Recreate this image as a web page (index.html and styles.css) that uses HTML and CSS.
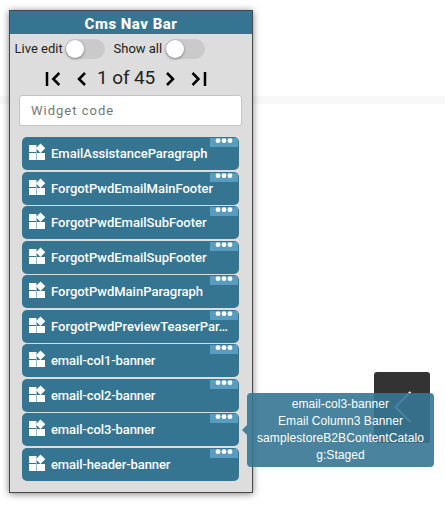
FILE: index.html
```
<!DOCTYPE html>
<html lang="en">
<head>
<meta charset="utf-8">
<title>Cms Nav Bar</title>
<link rel="stylesheet" href="styles.css">
</head>
<body>
<svg width="0" height="0" class="defs">
  <symbol id="widget" viewBox="0 0 18 18"><path d="M1 2h7v7H1zM1 10h7v7H1zM9 10h8v7H9zM12.5 .6l4.8 4.7-4.8 4.7-4.7-4.7z"/><path opacity=".5" d="M8 2h1v15H8z"/></symbol>
  <symbol id="dots" viewBox="0 0 28 9"><circle cx="8" cy="2.7" r="2.4"/><circle cx="14" cy="2.7" r="2.4"/><circle cx="20" cy="2.7" r="2.4"/></symbol>
</svg>
<div class="divider"></div>
<main class="panel">
  <h1 class="title">Cms Nav Bar</h1>
  <div class="switches">
    <label class="switch live">Live edit<span class="track"><span class="knob"></span></span></label>
    <label class="switch">Show all<span class="track"><span class="knob"></span></span></label>
  </div>
  <nav class="pager">
    <svg class="first" width="16" height="14" viewBox="0 0 16 14"><path d="M2 0v14M14.3 1L8.3 7l6 6"/></svg>
    <svg class="prev" width="9" height="14" viewBox="0 0 9 14"><path d="M8 1L2 7l6 6"/></svg>
    <span class="count">1 of 45</span>
    <svg class="next" width="9" height="14" viewBox="0 0 9 14"><path d="M1 1l6 6-6 6"/></svg>
    <svg class="last" width="16" height="14" viewBox="0 0 16 14"><path d="M14 0v14M1.5 1l6 6-6 6"/></svg>
  </nav>
  <input class="search" type="text" placeholder="Widget code">
  <ul class="list">
    <li class="item"><svg class="icon"><use href="#widget"/></svg><span class="name">EmailAssistanceParagraph</span><svg class="more"><use href="#dots"/></svg></li>
    <li class="item"><svg class="icon"><use href="#widget"/></svg><span class="name">ForgotPwdEmailMainFooter</span><svg class="more"><use href="#dots"/></svg></li>
    <li class="item"><svg class="icon"><use href="#widget"/></svg><span class="name">ForgotPwdEmailSubFooter</span><svg class="more"><use href="#dots"/></svg></li>
    <li class="item"><svg class="icon"><use href="#widget"/></svg><span class="name">ForgotPwdEmailSupFooter</span><svg class="more"><use href="#dots"/></svg></li>
    <li class="item"><svg class="icon"><use href="#widget"/></svg><span class="name">ForgotPwdMainParagraph</span><svg class="more"><use href="#dots"/></svg></li>
    <li class="item"><svg class="icon"><use href="#widget"/></svg><span class="name">ForgotPwdPreviewTeaserPar…</span><svg class="more"><use href="#dots"/></svg></li>
    <li class="item"><svg class="icon"><use href="#widget"/></svg><span class="name tight">email-col1-banner</span><svg class="more"><use href="#dots"/></svg></li>
    <li class="item"><svg class="icon"><use href="#widget"/></svg><span class="name tight">email-col2-banner</span><svg class="more"><use href="#dots"/></svg></li>
    <li class="item"><svg class="icon"><use href="#widget"/></svg><span class="name tight">email-col3-banner</span><svg class="more"><use href="#dots"/></svg></li>
    <li class="item"><svg class="icon"><use href="#widget"/></svg><span class="name tight">email-header-banner</span><svg class="more"><use href="#dots"/></svg></li>
  </ul>
</main>
<div class="drawer"><svg width="18" height="32" viewBox="0 0 18 32"><path d="M16.5 1L1.5 16l15 15"/></svg></div>
<div class="tooltip">email-col3-banner<br>Email Column3 Banner<br>samplestoreB2BContentCatalog:Staged</div>
</body>
</html>
```
FILE: styles.css
```
* { box-sizing: border-box; }
body {
  position: relative;
  margin: 0;
  height: 518px;
  padding: 10px 0 0 9px;
  overflow: hidden;
  background: #fff;
  font-family: Roboto, sans-serif;
  color: #212121;
}
.defs { position: absolute; }
.divider {
  position: absolute;
  top: 96px;
  left: 0;
  right: 0;
  height: 8px;
  background: #f8f8f8;
}
.panel {
  position: relative;
  width: 244px;
  height: 483px;
  border: 1px solid #484848;
  background: #ddd;
  box-shadow: 0 1px 7px rgba(0, 0, 0, .5);
}
.title {
  margin: 0;
  height: 23px;
  background: #357592;
  color: #fff;
  font-size: 15px;
  font-weight: 800;
  letter-spacing: .5px;
  line-height: 26px;
  text-align: center;
}
.switches {
  display: flex;
  gap: 9px;
  height: 30px;
  padding: 5px 0 0 4.5px;
}
.switch {
  display: flex;
  font-size: 13px;
  line-height: 19px;
  white-space: nowrap;
  height: 20px;
  width: 91px;
  justify-content: space-between;
}
.live { width: 90px; }
.track {
  width: 40px;
  height: 20px;
  padding: 1px;
  border-radius: 10px;
  background: #cacaca;
}
.knob {
  display: block;
  width: 18px;
  height: 18px;
  border-radius: 50%;
  background: #fff;
  box-shadow: 0 1px 3px rgba(0, 0, 0, .4);
}
.pager {
  display: flex;
  align-items: center;
  height: 29px;
  padding-left: 35px;
}
.pager svg {
  flex: none;
  margin-top: 1px;
  fill: none;
  stroke: #000;
  stroke-width: 2.5;
}
.pager .first { margin-right: 16px; }
.count {
  width: 59px;
  margin: -2px 10px 0 11px;
  font-size: 19px;
  line-height: 26px;
  letter-spacing: -.1px;
  white-space: nowrap;
}
.pager .last { margin-left: 16px; }
.search {
  display: block;
  width: 223px;
  height: 31px;
  margin: 2px 0 0 9px;
  padding: 0 11px;
  border: 1px solid #c5c5c5;
  border-radius: 3px;
  background: #fff;
  font: 13px Roboto, sans-serif;
  letter-spacing: 1px;
}
.search::placeholder { color: #777; }
.list {
  display: flex;
  flex-direction: column;
  gap: 1.5px;
  margin: 11px 0 0 12px;
  padding: 0;
  width: 217px;
  list-style: none;
}
.item {
  position: relative;
  display: flex;
  align-items: center;
  height: 33.05px;
  padding-left: 6px;
  border-radius: 5px;
  background: #357592;
  color: #fff;
  font-size: 13px;
  font-weight: 500;
}
.icon {
  flex: none;
  width: 18px;
  height: 18px;
  margin-top: -3px;
  fill: #fff;
}
.name {
  margin-left: 5px;
  white-space: nowrap;
}
.tight { letter-spacing: -.1px; }
.more {
  position: absolute;
  top: 1px;
  right: 1px;
  width: 28px;
  height: 9px;
  background: #589cc0;
  fill: #fff;
}
.drawer {
  position: absolute;
  left: 374px;
  top: 372px;
  width: 56px;
  height: 71px;
  border-radius: 3px;
  background: #333;
}
.drawer svg {
  display: block;
  margin: 19px 0 0 20px;
  fill: none;
  stroke: #fff;
  stroke-width: 2;
}
.tooltip {
  position: absolute;
  left: 247px;
  top: 393px;
  width: 187px;
  height: 74px;
  padding: 3px 8px;
  border-radius: 4px;
  background: rgba(53, 117, 146, .9);
  color: #fff;
  font: 12px/17px "Liberation Sans", Arial, sans-serif;
  letter-spacing: .08px;
  text-align: center;
  word-break: break-all;
}
.tooltip::before {
  content: "";
  position: absolute;
  left: -5px;
  top: 32px;
  border: 5px solid transparent;
  border-left: 0;
  border-right-color: rgba(53, 117, 146, .9);
}
```
